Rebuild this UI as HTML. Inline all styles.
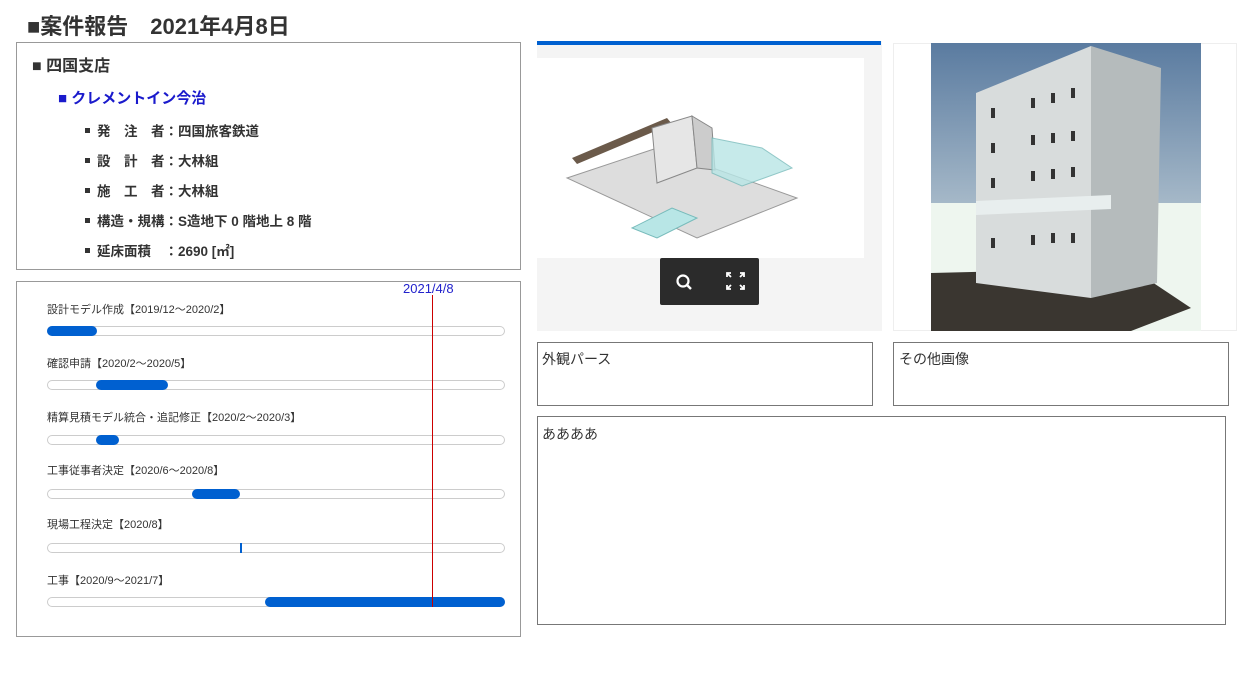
<!DOCTYPE html>
<html><head><meta charset="utf-8"><style>
*{margin:0;padding:0;box-sizing:border-box}
body{width:1237px;height:674px;background:#fff;font-family:"Liberation Sans","Noto Sans CJK JP",sans-serif;color:#333;position:relative;overflow:hidden}
.a{position:absolute}
.box{position:absolute;border:1px solid #999}
.lbl{position:absolute;font-size:11px;color:#333;left:47px}
.track{position:absolute;left:47px;width:458px;height:10px;border:1px solid #ccc;border-radius:5px;background:#fff}
.fill{position:absolute;height:10px;background:#0060d0;border-radius:5px}
.li{position:absolute;left:85px;font-size:13.5px;font-weight:bold;color:#333}
.li:before{content:"";display:inline-block;width:5px;height:5px;background:#333;margin-right:7px;vertical-align:middle;position:relative;top:-2px}
</style></head><body>
<div class="a" style="left:27px;top:9px;font-size:22px;font-weight:bold;color:#333">■案件報告　2021年4月8日</div>

<div class="box" style="left:16px;top:42px;width:505px;height:228px"></div>
<div class="a" style="left:32px;top:52px;font-size:16px;font-weight:bold">■ 四国支店</div>
<div class="a" style="left:58px;top:87px;font-size:15px;font-weight:bold;color:#1a1acc">■ クレメントイン今治</div>
<div class="li" style="top:120px">発　注　者：四国旅客鉄道</div>
<div class="li" style="top:150px">設　計　者：大林組</div>
<div class="li" style="top:180px">施　工　者：大林組</div>
<div class="li" style="top:210px">構造・規構：S造地下 0 階地上 8 階</div>
<div class="li" style="top:240px">延床面積　：2690 [㎡]</div>

<div class="box" style="left:16px;top:281px;width:505px;height:356px"></div>
<div class="a" style="left:403px;top:281px;font-size:13px;color:#2222cc">2021/4/8</div>
<div class="lbl" style="top:301px">設計モデル作成【2019/12～2020/2】</div>
<div class="track" style="top:326px"></div><div class="fill" style="left:47px;width:50px;top:326px"></div>
<div class="lbl" style="top:355px">確認申請【2020/2～2020/5】</div>
<div class="track" style="top:380px"></div><div class="fill" style="left:96px;width:72px;top:380px"></div>
<div class="lbl" style="top:409px">精算見積モデル統合・追記修正【2020/2～2020/3】</div>
<div class="track" style="top:435px"></div><div class="fill" style="left:96px;width:23px;top:435px"></div>
<div class="lbl" style="top:462px">工事従事者決定【2020/6～2020/8】</div>
<div class="track" style="top:489px"></div><div class="fill" style="left:192px;width:48px;top:489px"></div>
<div class="lbl" style="top:516px">現場工程決定【2020/8】</div>
<div class="track" style="top:543px"></div><div class="fill" style="left:240px;width:2px;top:543px;border-radius:0"></div>
<div class="lbl" style="top:572px">工事【2020/9～2021/7】</div>
<div class="track" style="top:597px"></div><div class="fill" style="left:265px;width:240px;top:597px"></div>
<div class="a" style="left:432px;top:295px;width:1px;height:312px;background:#c00"></div>

<div class="a" style="left:537px;top:41px;width:345px;height:290px;background:#f4f4f4"></div>
<div class="a" style="left:537px;top:41px;width:344px;height:4px;background:#0060d0"></div>
<div class="a" style="left:537px;top:58px;width:327px;height:200px;background:#fff"></div>
<svg class="a" style="left:537px;top:58px" width="327" height="200">
<polygon points="30,120 120,90 260,140 160,180" fill="#ddd" stroke="#999"/>
<polygon points="35,100 130,60 135,66 40,106" fill="#6b5a4a"/>
<polygon points="115,70 155,58 160,110 120,125" fill="#e6e6e6" stroke="#888"/>
<polygon points="155,58 175,70 178,112 160,110" fill="#ccc" stroke="#888"/>
<polygon points="175,80 225,90 255,110 205,128 175,115" fill="#b8e6e6" opacity=".8" stroke="#7bb"/>
<polygon points="95,170 135,150 160,160 120,180" fill="#b8e6e6" stroke="#7bb"/>
</svg>
<div class="a" style="left:660px;top:258px;width:99px;height:47px;background:#2b2b2b;border-radius:2px"></div>
<svg class="a" style="left:660px;top:258px" width="99" height="47">
<circle cx="23" cy="23" r="5.5" fill="none" stroke="#fff" stroke-width="2.2"/><line x1="27" y1="27" x2="31" y2="31" stroke="#fff" stroke-width="2.4"/>
<g stroke="#fff" stroke-width="1.8" fill="none"><path d="M67 19v-4h4M80 15h4v4M84 27v4h-4M71 31h-4v-4"/><path d="M67 15l4 4M84 15l-4 4M84 31l-4-4M67 31l4-4"/></g>
</svg>

<div class="a" style="left:893px;top:43px;width:344px;height:288px;border:1px solid #eee;background:#fff"></div>
<svg class="a" style="left:931px;top:43px" width="270" height="288">
<defs><linearGradient id="s" x1="0" y1="0" x2="0" y2="1"><stop offset="0" stop-color="#5a7ba0"/><stop offset="1" stop-color="#a5b8c8"/></linearGradient></defs>
<rect width="270" height="160" fill="url(#s)"/><rect y="160" width="270" height="128" fill="#eef6ef"/>
<polygon points="0,230 200,225 260,265 200,288 0,288" fill="#3a3630"/>
<polygon points="45,50 160,3 160,255 45,240" fill="#d8dcdc"/>
<polygon points="160,3 230,25 226,240 160,255" fill="#b5bbbc"/>
<polygon points="45,158 180,152 180,166 45,172" fill="#e8eeee"/>
<g fill="#333">
<rect x="60" y="65" width="4" height="10"/><rect x="100" y="55" width="4" height="10"/><rect x="120" y="50" width="4" height="10"/><rect x="140" y="45" width="4" height="10"/>
<rect x="60" y="100" width="4" height="10"/><rect x="100" y="92" width="4" height="10"/><rect x="120" y="90" width="4" height="10"/><rect x="140" y="88" width="4" height="10"/>
<rect x="60" y="135" width="4" height="10"/><rect x="100" y="128" width="4" height="10"/><rect x="120" y="126" width="4" height="10"/><rect x="140" y="124" width="4" height="10"/>
<rect x="60" y="195" width="4" height="10"/><rect x="100" y="192" width="4" height="10"/><rect x="120" y="190" width="4" height="10"/><rect x="140" y="190" width="4" height="10"/>
</g>
</svg>

<div class="box" style="left:537px;top:342px;width:336px;height:64px;border-color:#777"></div>
<div class="a" style="left:542px;top:349px;font-size:14px">外観パース</div>
<div class="box" style="left:893px;top:342px;width:336px;height:64px;border-color:#777"></div>
<div class="a" style="left:899px;top:349px;font-size:14px">その他画像</div>
<div class="box" style="left:537px;top:416px;width:689px;height:209px;border-color:#777"></div>
<div class="a" style="left:542px;top:424px;font-size:14px">ああああ</div>
</body></html>
